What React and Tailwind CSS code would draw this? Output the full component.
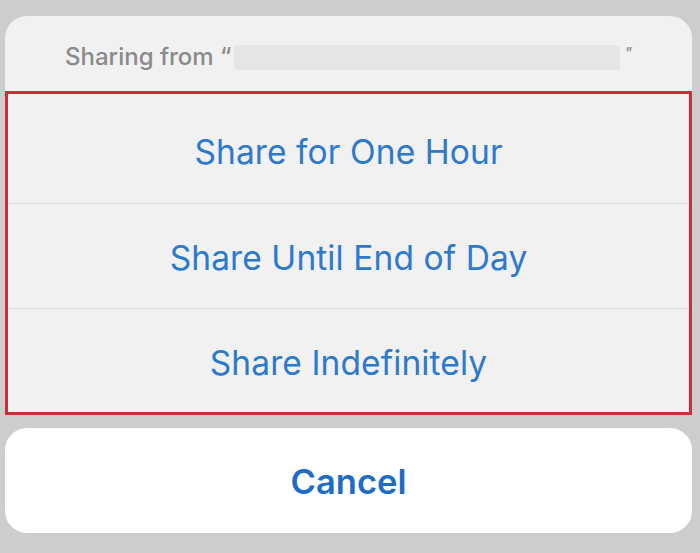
const options = [
  { label: 'Share for One Hour', h: 'h-[109px] pt-[7px]' },
  { label: 'Share Until End of Day', h: 'h-[105px] pt-[4px]' },
  { label: 'Share Indefinitely', h: 'h-[104px] pt-[6px]' },
];

export default function App() {
  return (
    <div
      className="w-[700px] h-[553px] bg-[#cdcdcd] flex flex-col pl-[5px] pr-[8px] pt-[16px] pb-[20px] overflow-hidden"
      style={{ fontFamily: 'Inter, "Liberation Sans", sans-serif' }}
    >
      {/* Action sheet */}
      <div className="bg-[#f1f1f1] rounded-t-[22px] flex flex-col">
        <div className="h-[75px] flex items-center pt-[7px] pl-[60px] pr-[60px] text-[24px] text-[#8a8a8a] font-medium">
          <span>Sharing from “</span>
          <span className="h-[25px] flex-1 bg-[#e5e5e5] rounded-[3px] ml-[3px] mr-[1px]" />
          <span className="ml-[4px] -mt-[8px] text-[15px] italic">"</span>
        </div>
        <div className="border-[3px] border-[#cf2b36] flex flex-col">
          {options.map(({ label, h }, i) => (
            <div
              key={label}
              className={`${h} flex items-center justify-center text-[33.5px] text-[#2d79cb] tracking-[0.1px] ${
                i > 0 ? 'border-t border-[#d9d9d9]' : ''
              }`}
            >
              {label}
            </div>
          ))}
        </div>
      </div>

      {/* Cancel */}
      <div className="mt-[13px] flex-1 bg-white rounded-[22px] flex items-center justify-center pt-[3px] text-[34.5px] font-semibold text-[#1f6cc4]">
        Cancel
      </div>
    </div>
  );
}
